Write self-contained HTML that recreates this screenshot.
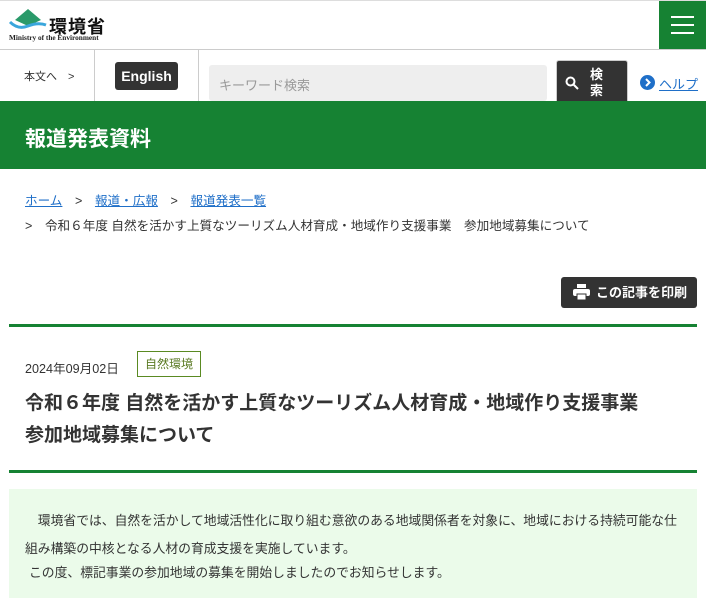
<!DOCTYPE html>
<html><head><meta charset="utf-8"><style>
*{margin:0;padding:0;box-sizing:border-box}
body{width:706px;height:610px;overflow:hidden;background:#fff;font-family:"Liberation Sans","Noto Sans CJK JP",sans-serif;color:#333;position:relative}
.a{position:absolute}
</style></head><body>
<div class="a" style="left:0;top:0;width:706px;height:1px;background:#ddd"></div>
<svg class="a" style="left:8px;top:9px" width="40" height="24" viewBox="0 0 40 24">
<polygon points="20,0 33,11 20,17 7,11" fill="#2a9a6a"/>
<path d="M2,13 Q10,21 20,17 Q30,13 38,16" stroke="#3aa6dc" stroke-width="3" fill="none"/>
</svg>
<div class="a" style="left:49px;top:13px;font-size:18px;font-weight:bold;color:#111;letter-spacing:1px">環境省</div>
<div class="a" style="left:9px;top:33px;font-size:7.3px;font-family:'Liberation Serif',serif;font-weight:bold;color:#222">Ministry of the Environment</div>
<div class="a" style="left:659px;top:1px;width:47px;height:48px;background:#168233"></div>
<div class="a" style="left:671px;top:16px;width:23px;height:2px;background:#fff"></div>
<div class="a" style="left:671px;top:24px;width:23px;height:2px;background:#fff"></div>
<div class="a" style="left:671px;top:32px;width:23px;height:2px;background:#fff"></div>
<div class="a" style="left:0;top:49px;width:706px;height:1px;background:#ccc"></div>
<div class="a" style="left:94px;top:50px;width:1px;height:51px;background:#ccc"></div>
<div class="a" style="left:198px;top:50px;width:1px;height:51px;background:#ccc"></div>
<div class="a" style="left:24px;top:68px;font-size:11px;color:#333">本文へ　&gt;</div>
<div class="a" style="left:115px;top:62px;width:63px;height:28px;background:#333;border-radius:3px;color:#fff;font-size:14px;font-weight:bold;text-align:center;line-height:28px">English</div>
<div class="a" style="left:209px;top:65px;width:338px;height:36px;background:#eee;border-radius:3px;color:#999;font-size:13px;padding:10px 0 0 10px">キーワード検索</div>
<div class="a" style="left:556px;top:60px;width:72px;height:47px;background:#333;border-radius:3px;border:1px solid #ccc"></div>
<svg class="a" style="left:565px;top:76px" width="14" height="14" viewBox="0 0 14 14"><circle cx="5.5" cy="5.5" r="4" stroke="#fff" stroke-width="2" fill="none"/><path d="M8.5 8.5L13 13" stroke="#fff" stroke-width="2"/></svg>
<div class="a" style="left:590px;top:67px;font-size:13px;font-weight:bold;color:#fff;line-height:16px;width:14px">検索</div>
<svg class="a" style="left:640px;top:75px" width="15" height="15" viewBox="0 0 15 15"><circle cx="7.5" cy="7.5" r="7.5" fill="#1f6fc8"/><path d="M6 4L9.5 7.5L6 11" stroke="#fff" stroke-width="2" fill="none"/></svg>
<div class="a" style="left:659px;top:74px;font-size:13px;color:#1f6fc8;text-decoration:underline">ヘルプ</div>
<div class="a" style="left:0;top:101px;width:706px;height:68px;background:#168233"></div>
<div class="a" style="left:25px;top:123px;font-size:21px;font-weight:bold;color:#fff">報道発表資料</div>
<div class="a" style="left:25px;top:190px;font-size:12.6px;color:#333"><span style="color:#1f6fc8;text-decoration:underline">ホーム</span>　&gt;　<span style="color:#1f6fc8;text-decoration:underline">報道・広報</span>　&gt;　<span style="color:#1f6fc8;text-decoration:underline">報道発表一覧</span></div>
<div class="a" style="left:25px;top:215px;font-size:12.6px;color:#333">&gt;　令和６年度 自然を活かす上質なツーリズム人材育成・地域作り支援事業　参加地域募集について</div>
<div class="a" style="left:561px;top:277px;width:136px;height:31px;background:#333;border-radius:3px;color:#fff;font-size:13px;font-weight:bold;line-height:31px;padding-left:35px">この記事を印刷</div>
<svg class="a" style="left:573px;top:284px" width="17" height="16" viewBox="0 0 17 16"><rect x="4" y="0" width="9" height="4" fill="#fff"/><rect x="0" y="5" width="17" height="7" rx="2" fill="#fff"/><rect x="4" y="10" width="9" height="6" fill="#fff" stroke="#333" stroke-width="1"/></svg>
<div class="a" style="left:9px;top:324px;width:688px;height:3px;background:#168233"></div>
<div class="a" style="left:25px;top:358px;font-size:12.6px;color:#333">2024年09月02日</div>
<div class="a" style="left:137px;top:351px;width:64px;height:26px;border:1px solid #5a8a22;color:#5a7a22;font-size:12px;text-align:center;line-height:24px">自然環境</div>
<div class="a" style="left:25px;top:388px;font-size:19px;font-weight:bold;color:#333;line-height:32px">令和６年度 自然を活かす上質なツーリズム人材育成・地域作り支援事業<br>参加地域募集について</div>
<div class="a" style="left:9px;top:470px;width:688px;height:3px;background:#168233"></div>
<div class="a" style="left:9px;top:489px;width:688px;height:109px;background:#ebfbea"></div>
<div class="a" style="left:25px;top:507px;font-size:12.8px;color:#333;line-height:28px;width:662px">　環境省では、自然を活かして地域活性化に取り組む意欲のある地域関係者を対象に、地域における持続可能な仕組み構築の中核となる人材の育成支援を実施しています。</div>
<div class="a" style="left:29px;top:562px;font-size:12.8px;color:#333">この度、標記事業の参加地域の募集を開始しましたのでお知らせします。</div>
</body></html>
